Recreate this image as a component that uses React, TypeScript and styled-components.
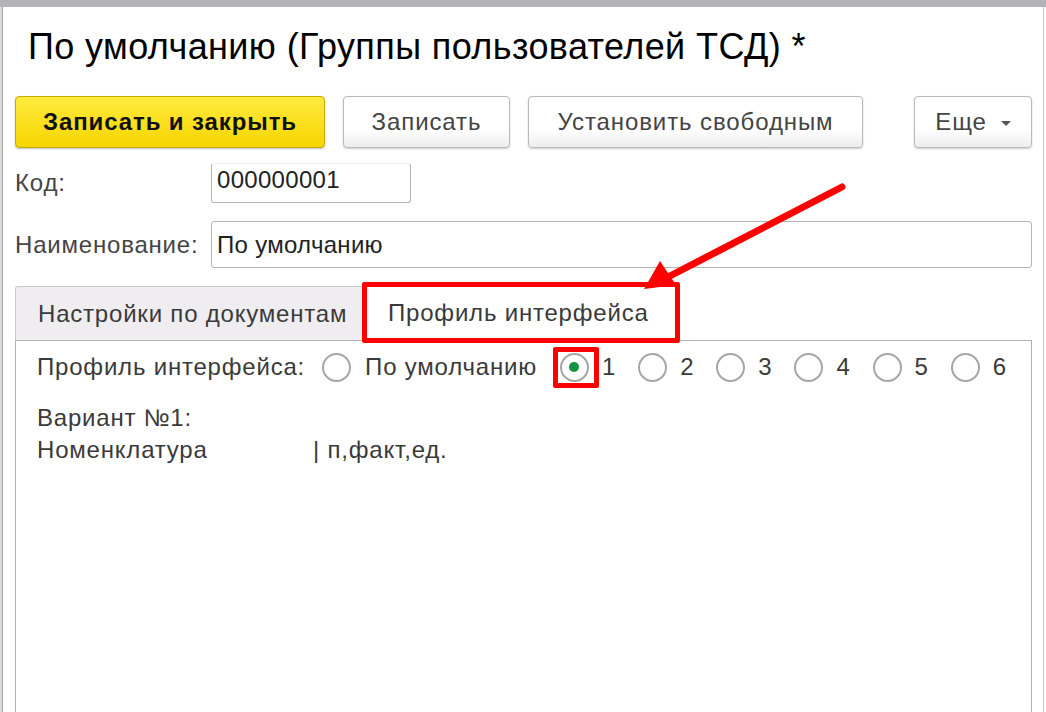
import React from "react";
import styled, { createGlobalStyle, css } from "styled-components";

const GlobalStyle = createGlobalStyle`
  html, body {
    margin: 0;
    padding: 0;
    background: #ffffff;
    font-family: "Liberation Sans", Arial, sans-serif;
  }
  #root {
    min-height: 712px;
  }
`;

const Window = styled.div`
  position: relative;
  height: 712px;
  overflow: hidden;
  background: #fff;
  border-top: 7px solid #b4b4b6;
  box-sizing: border-box;
  letter-spacing: 0.8px;
  &::before {
    content: "";
    position: absolute;
    left: 0;
    top: 0;
    bottom: 0;
    width: 2px;
    background: #dcdcdc;
    border-right: 1px solid #a8a8a8;
  }
  &::after {
    content: "";
    position: absolute;
    right: 2px;
    top: 0;
    bottom: 0;
    width: 1px;
    background: #c8c8c8;
  }
`;

const Content = styled.div`
  padding: 0 14px 0 15px;
  display: flex;
  flex-direction: column;
`;

const Title = styled.h1`
  margin: 20px 0 0 13px;
  font-weight: normal;
  font-size: 36px;
  line-height: 40px;
  color: #000;
  letter-spacing: 0.4px;
`;

const Toolbar = styled.div`
  display: flex;
  align-items: center;
  gap: 18px;
  margin-top: 29px;
`;

const Button = styled.button<{ $primary?: boolean; $width: number; $push?: boolean }>`
  width: ${(p) => p.$width}px;
  height: 52px;
  box-sizing: border-box;
  border-radius: 4px;
  font-family: "Liberation Sans", Arial, sans-serif;
  font-size: 24px;
  letter-spacing: 0.9px;
  display: flex;
  align-items: center;
  justify-content: center;
  gap: 14px;
  padding: 0;
  cursor: pointer;
  ${(p) => p.$push && "margin-left: auto;"}
  ${(p) =>
    p.$primary
      ? css`
          background: linear-gradient(#ffea3f, #f6d600);
          border: 1px solid #c7a900;
          color: #111;
          font-weight: bold;
          box-shadow: 0 1px 2px rgba(0, 0, 0, 0.25);
        `
      : css`
          background: linear-gradient(#ffffff 0%, #ffffff 65%, #ededed 100%);
          border: 1px solid #b9b9b9;
          color: #444;
          box-shadow: 0 1px 2px rgba(0, 0, 0, 0.2);
        `}
`;

const Caret = styled.span`
  width: 0;
  height: 0;
  border-left: 5px solid transparent;
  border-right: 5px solid transparent;
  border-top: 5px solid #555;
  margin-top: 2px;
`;

const FieldRow = styled.div<{ $top: number }>`
  display: flex;
  align-items: center;
  margin-top: ${(p) => p.$top}px;
`;

const Label = styled.span`
  width: 196px;
  font-size: 24px;
  color: #444;
  flex-shrink: 0;
  align-self: center;
`;

const Input = styled.div<{ $width?: number; $height: number; $noTop?: boolean }>`
  ${(p) => (p.$width ? `width: ${p.$width}px;` : "flex: 1;")}
  height: ${(p) => p.$height}px;
  box-sizing: border-box;
  border: 1px solid #b4b4b4;
  ${(p) =>
    p.$noTop &&
    css`
      border-top-color: #f2f2f2;
      padding-bottom: 6px;
    `}
  border-radius: 3px;
  display: flex;
  align-items: center;
  padding-left: 5px;
  font-size: 24px;
  letter-spacing: 0.3px;
  color: #222;
`;

const Tabs = styled.div`
  margin-top: 18px;
  display: flex;
  flex-direction: column;
`;

const TabStrip = styled.div`
  display: flex;
  height: 54px;
`;

const Tab = styled.div<{ $active?: boolean; $marked?: boolean; $width: number }>`
  position: relative;
  width: ${(p) => p.$width}px;
  box-sizing: border-box;
  display: flex;
  align-items: center;
  font-size: 24px;
  color: #3a3a3a;
  padding-left: 22px;
  white-space: nowrap;
  ${(p) =>
    p.$active
      ? css`
          background: #fff;
          padding-left: 23px;
        `
      : css`
          background: #efedf0;
          border: 1px solid #c9c9c9;
          border-bottom: none;
          border-radius: 3px 0 0 0;
        `}
  ${(p) =>
    p.$marked &&
    css`
      &::after {
        content: "";
        position: absolute;
        left: -3px;
        right: -2px;
        top: -4px;
        bottom: -3px;
        border: 5px solid #ff0000;
        border-radius: 2px;
      }
    `}
`;

const Panel = styled.div`
  height: 400px;
  border: 1px solid #b2b2b2;
  border-bottom: none;
  padding: 10px 21px;
  color: #3a3a3a;
  font-size: 24px;
`;

const RadioRow = styled.div`
  display: flex;
  align-items: center;
  height: 32px;
  white-space: nowrap;
`;

const RadioLabel = styled.span`
  margin-right: 17px;
  flex-shrink: 0;
`;

const RadioItem = styled.label<{ $gap: number; $inner: number }>`
  display: flex;
  align-items: center;
  flex-shrink: 0;
  gap: ${(p) => p.$inner}px;
  margin-right: ${(p) => p.$gap}px;
`;

const RadioCircle = styled.span<{ $checked?: boolean; $marked?: boolean }>`
  position: relative;
  width: 29px;
  height: 29px;
  flex-shrink: 0;
  box-sizing: border-box;
  border: 2px solid #a6a6a6;
  border-radius: 50%;
  display: flex;
  align-items: center;
  justify-content: center;
  ${(p) =>
    p.$checked &&
    css`
      &::before {
        content: "";
        width: 10px;
        height: 10px;
        border-radius: 50%;
        background: #0f9444;
      }
    `}
  ${(p) =>
    p.$marked &&
    css`
      &::after {
        content: "";
        position: absolute;
        left: -9px;
        top: -8px;
        width: 46px;
        height: 41px;
        box-sizing: border-box;
        border: 5px solid #ff0000;
        border-radius: 2px;
      }
    `}
`;

const Description = styled.div`
  margin-top: 19px;
  line-height: 32px;
`;

const DescLine = styled.div`
  display: flex;
`;

const DescKey = styled.span`
  width: 276px;
`;

const Arrow = styled.svg`
  position: absolute;
  left: 0;
  top: 0;
  pointer-events: none;
`;

const radios = ["1", "2", "3", "4", "5", "6"];

const App = () => {
  return (
    <>
      <GlobalStyle />
      <Window>
        <Content>
          <Title>По умолчанию (Группы пользователей ТСД) *</Title>
          <Toolbar>
            <Button $primary $width={310}>Записать и закрыть</Button>
            <Button $width={167}>Записать</Button>
            <Button $width={335}>Установить свободным</Button>
            <Button $width={118} $push>
              Еще <Caret />
            </Button>
          </Toolbar>
          <FieldRow $top={15}>
            <Label>Код:</Label>
            <Input $width={200} $height={40} $noTop>000000001</Input>
          </FieldRow>
          <FieldRow $top={18}>
            <Label>Наименование:</Label>
            <Input $height={47}>По умолчанию</Input>
          </FieldRow>
          <Tabs>
            <TabStrip>
              <Tab $width={350}>Настройки по документам</Tab>
              <Tab $width={313} $active $marked>Профиль интерфейса</Tab>
            </TabStrip>
            <Panel>
              <RadioRow>
                <RadioLabel>Профиль интерфейса:</RadioLabel>
                <RadioItem $gap={23} $inner={14}>
                  <RadioCircle />
                  По умолчанию
                </RadioItem>
                {radios.map((r, i) => (
                  <RadioItem key={r} $gap={22} $inner={13}>
                    <RadioCircle $checked={i === 0} $marked={i === 0} />
                    {r}
                  </RadioItem>
                ))}
              </RadioRow>
              <Description>
                <div>Вариант №1:</div>
                <DescLine>
                  <DescKey>Номенклатура</DescKey>
                  <span>| п,факт,ед.</span>
                </DescLine>
              </Description>
            </Panel>
          </Tabs>
        </Content>
        <Arrow width="1046" height="712" viewBox="0 0 1046 712">
          <line x1="842" y1="180" x2="668" y2="270" stroke="#ff0000" strokeWidth="7" strokeLinecap="round" />
          <polygon points="644,282 660,254 676,278" fill="#ff0000" />
        </Arrow>
      </Window>
    </>
  );
};

export default App;
